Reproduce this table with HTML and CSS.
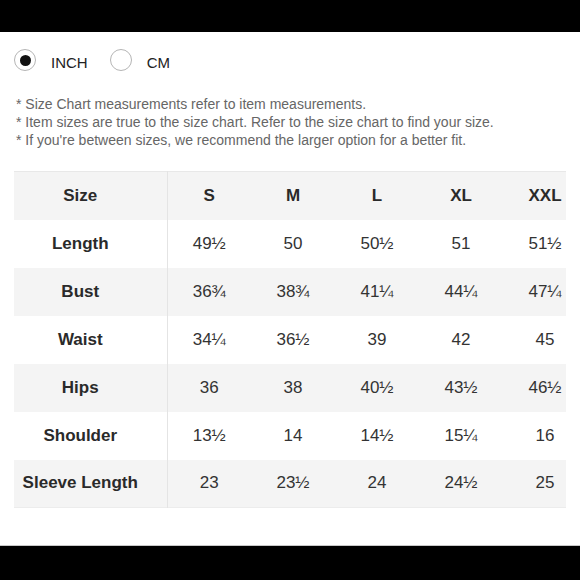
FILE: index.html
```html
<!DOCTYPE html>
<html>
<head>
<meta charset="utf-8">
<link rel="stylesheet" href="styles.css">
</head>
<body>
<div class="page">
  <div class="topbar"></div>
  <main class="content">
    <div class="units">
      <label class="unit"><span class="radio checked"></span><span class="unit-label">INCH</span></label>
      <label class="unit"><span class="radio"></span><span class="unit-label">CM</span></label>
    </div>
    <div class="notes">
      <p>* Size Chart measurements refer to item measurements.</p>
      <p>* Item sizes are true to the size chart. Refer to the size chart to find your size.</p>
      <p>* If you're between sizes, we recommend the larger option for a better fit.</p>
    </div>
    <div class="table-wrap">
      <table class="chart">
        <thead>
          <tr><th>Size</th><th>S</th><th>M</th><th>L</th><th>XL</th><th>XXL</th></tr>
        </thead>
        <tbody>
          <tr><th>Length</th><td>49½</td><td>50</td><td>50½</td><td>51</td><td>51½</td></tr>
          <tr class="alt"><th>Bust</th><td>36¾</td><td>38¾</td><td>41¼</td><td>44¼</td><td>47¼</td></tr>
          <tr><th>Waist</th><td>34¼</td><td>36½</td><td>39</td><td>42</td><td>45</td></tr>
          <tr class="alt"><th>Hips</th><td>36</td><td>38</td><td>40½</td><td>43½</td><td>46½</td></tr>
          <tr><th>Shoulder</th><td>13½</td><td>14</td><td>14½</td><td>15¼</td><td>16</td></tr>
          <tr class="alt"><th>Sleeve Length</th><td>23</td><td>23½</td><td>24</td><td>24½</td><td>25</td></tr>
        </tbody>
      </table>
    </div>
  </main>
  <div class="bottombar"></div>
</div>
</body>
</html>
```
FILE: styles.css
```css
html, body {
  margin: 0;
  padding: 0;
  background: #fff;
}
body {
  font-family: "Liberation Sans", Arial, sans-serif;
}
.page {
  height: 580px;
  display: flex;
  flex-direction: column;
  overflow: hidden;
}
.topbar {
  height: 32px;
  background: #000;
  flex: none;
}
.content {
  flex: 1;
  padding: 0 14px;
}
.units {
  display: flex;
  align-items: center;
  height: 24px;
  margin-top: 16px;
}
.unit {
  display: flex;
  align-items: center;
  margin-right: 22px;
}
.radio {
  width: 22px;
  height: 22px;
  box-sizing: border-box;
  border: 1.5px solid #b5b5b5;
  border-radius: 50%;
  display: flex;
  align-items: center;
  justify-content: center;
  margin-right: 15px;
}
.radio.checked::after {
  content: "";
  width: 11px;
  height: 11px;
  border-radius: 50%;
  background: #111;
}
.unit-label {
  font-size: 15px;
  color: #222;
  padding-top: 4px;
}
.notes {
  margin-top: 23px;
  padding-left: 2px;
}
.notes p {
  margin: 0;
  font-size: 14px;
  line-height: 18px;
  color: #666;
}
.table-wrap {
  margin-top: 22px;
  width: 552px;
  overflow: hidden;
}
.chart {
  border-collapse: collapse;
  table-layout: fixed;
  width: 573px;
}
.chart th, .chart td {
  height: 48px;
  padding: 0;
  text-align: center;
  font-size: 17px;
  box-sizing: border-box;
}
.chart th:first-child {
  width: 153px;
  padding-right: 20px;
  border-right: 1px solid #e4e4e4;
}
.chart th {
  font-weight: bold;
  color: #2a2a2a;
}
.chart td {
  color: #333;
  width: 84px;
}
.chart thead tr {
  background: #f4f4f4;
  border-top: 1px solid #e8e8e8;
}
.chart tr.alt {
  background: #f4f4f4;
}
.chart tbody tr:last-child {
  border-bottom: 1px solid #ececec;
}
.bottombar {
  height: 34px;
  flex: none;
  background: #000;
  border-top: 1px solid #c8c8c8;
}
```
